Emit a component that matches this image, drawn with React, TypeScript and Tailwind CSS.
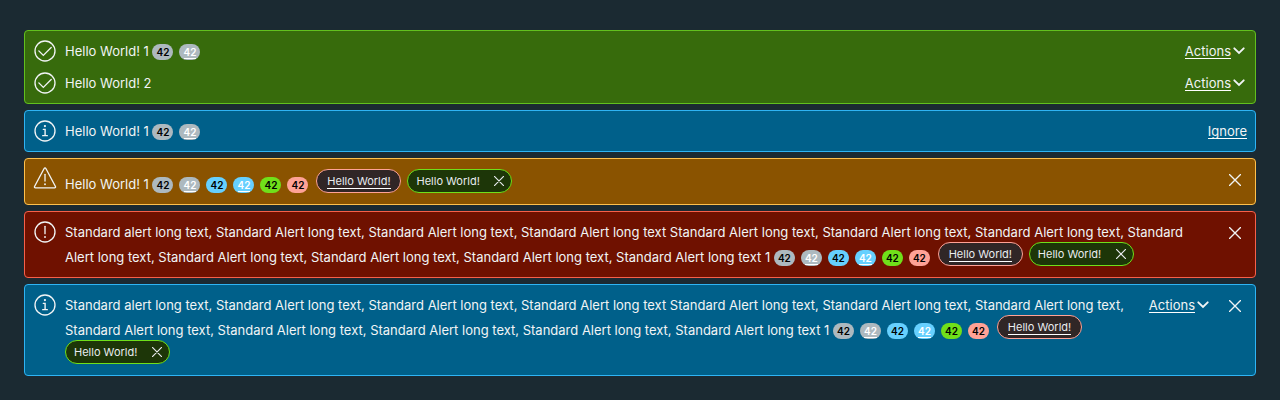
import React from "react";

type Tone = "success" | "info" | "warning" | "danger";

const tones: Record<Tone, string> = {
  success: "bg-[#376b0c] border-[#62c01e]",
  info: "bg-[#00608a] border-[#2fb4f4]",
  warning: "bg-[#8a5300] border-[#ffc04d]",
  danger: "bg-[#6f1100] border-[#f8604a]",
};

function StatusIcon({ tone }: { tone: Tone }) {
  return (
    <svg viewBox="0 0 36 36" className="size-6 shrink-0" fill="currentColor" aria-hidden="true">
      {tone !== "warning" && <circle cx="18" cy="18" r="15" fill="none" stroke="currentColor" strokeWidth="2" />}
      {tone === "success" && (
        <path d="M28,12.1a1,1,0,0,0-1.41,0L15.49,23.15l-6-6A1,1,0,0,0,8,18.53L15.49,26,28,13.52A1,1,0,0,0,28,12.1Z" />
      )}
      {tone === "info" && (
        <>
          <circle cx="17.9" cy="10.6" r="1.7" />
          <path d="M21.5,24H19.2V14.6H15.5a1,1,0,0,0,0,2h1.6V24H14.5a1,1,0,1,0,0,2h7a1,1,0,0,0,0-2Z" />
        </>
      )}
      {tone === "danger" && (
        <>
          <path d="M17,9.5a1,1,0,0,1,2,0v11a1,1,0,0,1-2,0Z" />
          <circle cx="18" cy="25.5" r="1.4" />
        </>
      )}
      {tone === "warning" && (
        <>
          <path
            d="M16.7 2.3 2.3 29.2A1.5 1.5 0 0 0 3.6 31.4H32.4A1.5 1.5 0 0 0 33.7 29.2L19.3 2.3A1.5 1.5 0 0 0 16.7 2.3Z"
            fill="none"
            stroke="currentColor"
            strokeWidth="2"
          />
          <path d="M17,11a1,1,0,0,1,2,0v10a1,1,0,0,1-2,0Z" />
          <circle cx="18" cy="25.8" r="1.4" />
        </>
      )}
    </svg>
  );
}

function Cross({ className }: { className: string }) {
  return (
    <svg viewBox="0 0 12 12" className={className} fill="none" stroke="currentColor" aria-hidden="true">
      <path d="M.5.5 11.5 11.5M11.5.5.5 11.5" strokeWidth="1.4" strokeLinecap="round" />
    </svg>
  );
}

const badgeBase =
  "mr-1.5 inline-flex h-4 w-[21px] items-start justify-center rounded-full pt-[3px] align-baseline text-[10px] font-semibold ";

function Badge({ color }: { color: string }) {
  return (
    <span className={badgeBase + color}>
      <span className="h-3 leading-[11px]">42</span>
    </span>
  );
}

function BadgeLink({ color }: { color: string }) {
  return (
    <a href="#badge" className={badgeBase + "text-white " + color}>
      <span className="h-3 border-b border-white leading-[11px]">42</span>
    </a>
  );
}

function NeutralBadges() {
  return (
    <>
      <Badge color="bg-[#adb9bf] text-black" />
      <BadgeLink color="bg-[#adb9bf]" />
    </>
  );
}

function AllBadges() {
  return (
    <>
      <NeutralBadges />
      <Badge color="bg-[#66d0ff] text-black" />
      <BadgeLink color="bg-[#66d0ff]" />
      <Badge color="bg-[#70e01a] text-black" />
      <Badge color="bg-[#ffa296] text-black" />
      <a
        href="#label"
        className="mr-1.5 ml-0.5 inline-flex h-6 w-[85px] items-start justify-center rounded-full border border-[#ffa296] bg-[#302626] pt-1 align-[4px] text-[11px] text-[#e9ecef]"
      >
        <span className="h-[15px] border-b border-white leading-[14px]">Hello World!</span>
      </a>
      <span className="inline-flex h-6 w-[105px] items-start justify-between rounded-full border border-[#70e01a] bg-[#1d3608] pt-1 pr-[7px] pl-2 align-[4px] text-[11px] leading-[14px] text-[#e9ecef]">
        Hello World!
        <button type="button" aria-label="Remove label" className="flex h-[14px] items-center">
          <Cross className="size-[10px]" />
        </button>
      </span>
    </>
  );
}

function Actions() {
  return (
    <button type="button" className="mt-1 mr-0.5 flex h-4 shrink-0 items-center gap-0.5">
      <span className="h-4 border-b border-white leading-4">Actions</span>
      <svg viewBox="0 0 12 12" className="size-3" fill="none" stroke="currentColor" aria-hidden="true">
        <path d="M1.3 3.3 6 8 10.7 3.3" strokeWidth="1.9" strokeLinecap="round" />
      </svg>
    </button>
  );
}

function Item({ tone, action, children }: { tone: Tone; action?: React.ReactNode; children: React.ReactNode }) {
  return (
    <div className="flex grow items-start gap-2">
      <StatusIcon tone={tone} />
      <div className="grow py-0.5 leading-5">{children}</div>
      {action}
    </div>
  );
}

function Alert({ tone, closable, children }: { tone: Tone; closable?: boolean; children: React.ReactNode }) {
  return (
    <div role="alert" className={"flex items-start gap-3 rounded border p-2 " + tones[tone]}>
      <div className="flex grow flex-col gap-2">{children}</div>
      {closable && (
        <button type="button" aria-label="Close alert" className="mt-px flex size-6 shrink-0 items-center justify-center">
          <Cross className="size-3" />
        </button>
      )}
    </div>
  );
}

const longText =
  "Standard alert long text, Standard Alert long text, Standard Alert long text, Standard Alert long text Standard Alert long text, Standard Alert long text, Standard Alert long text, Standard Alert long text, Standard Alert long text, Standard Alert long text, Standard Alert long text, Standard Alert long text 1 ";

export default function App() {
  return (
    <main className="flex min-h-screen flex-col gap-1.5 bg-[#1b2a32] px-6 pt-[30px] pb-6 font-['Inter',sans-serif] text-[13px] text-[#f1f4f5]">
      <Alert tone="success">
        <Item tone="success" action={<Actions />}>
          Hello World! 1 <NeutralBadges />
        </Item>
        <Item tone="success" action={<Actions />}>
          Hello World! 2
        </Item>
      </Alert>
      <Alert tone="info">
        <Item
          tone="info"
          action={
            <a href="#ignore" className="mt-1 h-4 border-b border-white leading-4">
              Ignore
            </a>
          }
        >
          Hello World! 1 <NeutralBadges />
        </Item>
      </Alert>
      <Alert tone="warning" closable>
        <Item tone="warning">
          Hello World! 1 <AllBadges />
        </Item>
      </Alert>
      <Alert tone="danger" closable>
        <Item tone="danger">
          {longText}
          <AllBadges />
        </Item>
      </Alert>
      <Alert tone="info" closable>
        <Item tone="info" action={<Actions />}>
          {longText}
          <AllBadges />
        </Item>
      </Alert>
    </main>
  );
}
